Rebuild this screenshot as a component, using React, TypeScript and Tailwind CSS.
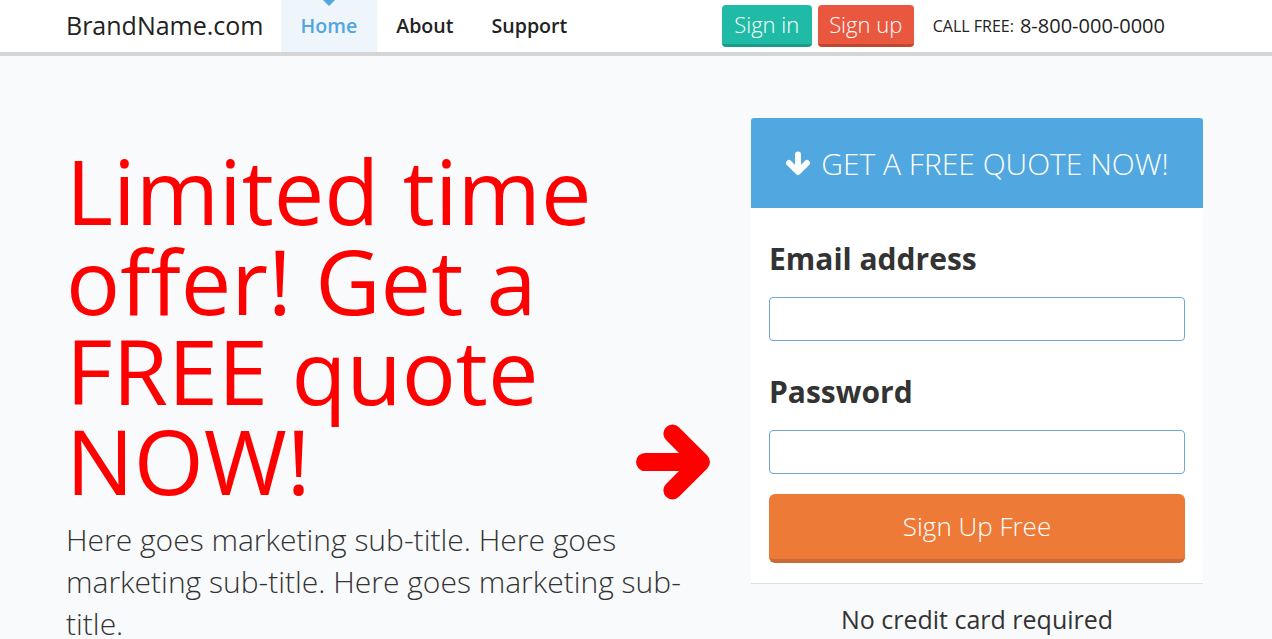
export default function App() {
  return (
    <div className="min-h-screen bg-[#f9fafc] font-['Open_Sans',sans-serif] text-[#333]">
      <header className="bg-white border-b-4 border-[#d5d5d5]">
        <div className="w-[1140px] mx-auto flex items-center h-[52px]">
          <a className="text-[25px] text-[#222] mr-[17px]">BrandName.com</a>
          <nav className="flex h-full">
            <a className="relative flex items-center h-full px-[20px] bg-[#eef5fb] text-[#52a6e0] text-[19.6px] font-semibold">
              <span className="absolute top-0 left-1/2 -translate-x-1/2 w-0 h-0 border-l-[6px] border-r-[6px] border-t-[6px] border-l-transparent border-r-transparent border-t-[#52a6e0]" />
              Home
            </a>
            <a className="flex items-center h-full px-[19px] text-[#222] text-[19.6px] font-semibold">About</a>
            <a className="flex items-center h-full px-[19px] text-[#222] text-[19.6px] font-semibold">Support</a>
          </nav>
          <div className="ml-auto mr-[41px] flex items-center">
            <button className="w-[90px] h-[42px] rounded-[4px] bg-[#1fbba6] border-b-[3px] border-[#199c8a] text-white text-[22px] font-light">
              Sign in
            </button>
            <button className="ml-[6px] w-[96px] h-[42px] rounded-[4px] bg-[#e9573f] border-b-[3px] border-[#c1452f] text-white text-[22px] font-light">
              Sign up
            </button>
            <span className="ml-[19px] text-[16px] text-[#222]">CALL FREE:</span>
            <span className="ml-[6px] text-[20px] text-[#222]">8-800-000-0000</span>
          </div>
        </div>
      </header>

      <main className="w-[1140px] mx-auto flex items-start pt-[62px]">
        <section className="relative w-[652px] pt-[27px]">
          <h1 className="text-[90px] leading-[90px] text-[#ff0000]">
            Limited time offer! Get a FREE quote NOW!
          </h1>
          <p className="mt-[14px] text-[30px] leading-[42px] font-light text-[#333]">
            Here goes marketing sub-title. Here goes marketing sub-title. Here goes marketing sub-title.
          </p>
          <svg
            className="absolute left-[570px] top-[305px]"
            width="75"
            height="79"
            viewBox="0 0 74 78"
            fill="none"
            stroke="#ff0000"
            strokeWidth="18"
            strokeLinecap="round"
            strokeLinejoin="round"
          >
            <path d="M9 38.5H63M36 10.5L64 38.5L36 66.5" />
          </svg>
        </section>

        <section className="ml-[33px] w-[452px]">
          <div className="h-[90px] rounded-t-[3px] bg-[#51a7e0] flex items-center justify-center text-white text-[30px] font-light">
            <svg width="26" height="25" viewBox="0 0 26 25" fill="none" stroke="#fff" strokeWidth="6" strokeLinecap="round" strokeLinejoin="round" className="mr-[10px]">
              <path d="M13 3.5V20M4 12L13 21L22 12" />
            </svg>
            GET A FREE QUOTE NOW!
          </div>
          <div className="bg-white px-[18px] pt-[34px] pb-[20px]">
            <label className="block text-[30px] leading-[33px] font-bold text-[#333]">Email address</label>
            <input type="email" className="mt-[22px] block w-full h-[44px] rounded-[4px] border border-[#6ea6d9] bg-white px-3 outline-none" />
            <label className="block mt-[34px] text-[30px] leading-[33px] font-bold text-[#333]">Password</label>
            <input type="password" className="mt-[22px] block w-full h-[44px] rounded-[4px] border border-[#6ea6d9] bg-white px-3 outline-none" />
            <button className="mt-[20px] w-full h-[69px] rounded-[6px] bg-[#ed7a37] border-b-4 border-[#c96a3a] text-white text-[26px] font-light">
              Sign Up Free
            </button>
          </div>
          <div className="border-t border-[#dcdfe3] pt-[17px] text-center text-[25px] leading-[36px] text-[#333]">
            No credit card required
          </div>
        </section>
      </main>
    </div>
  );
}
